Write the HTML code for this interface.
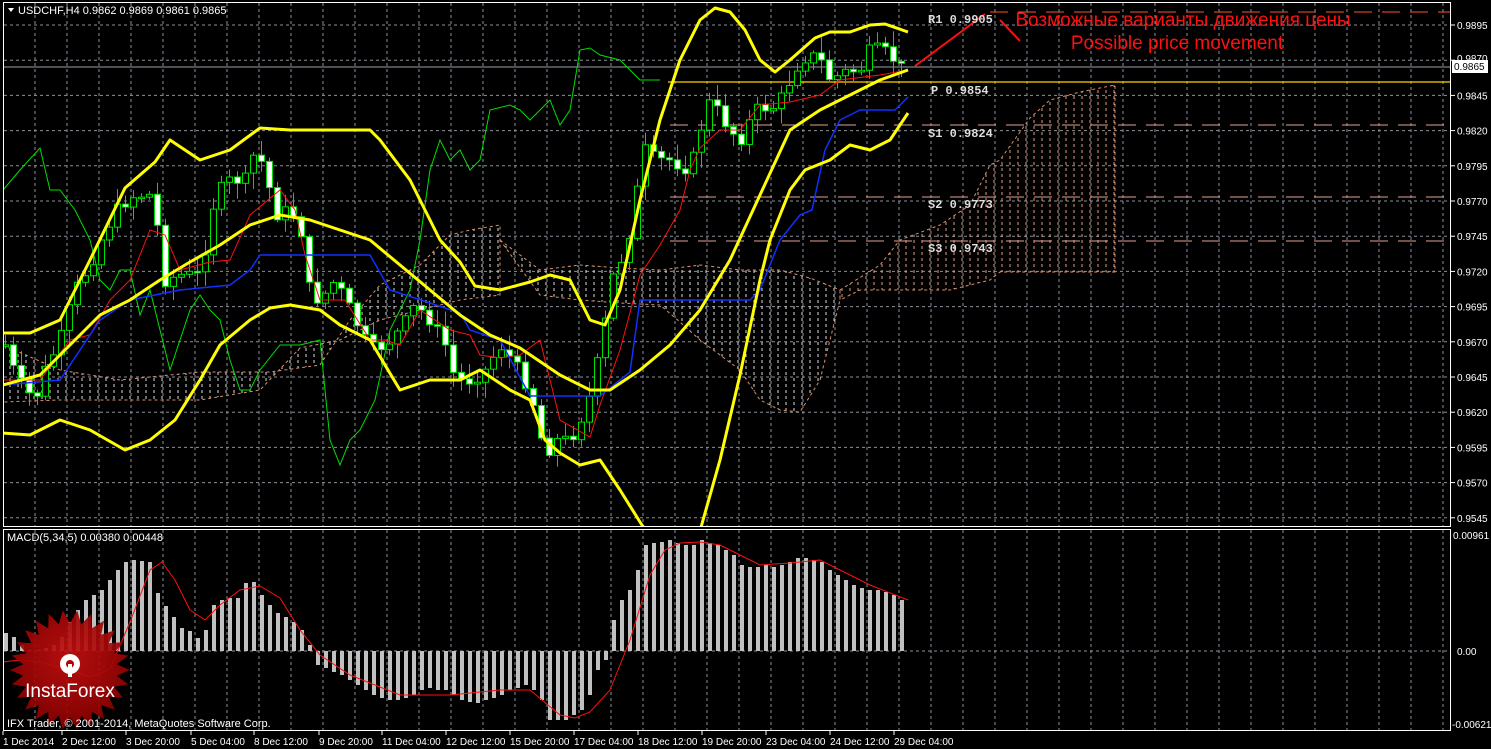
<!DOCTYPE html>
<html><head><meta charset="utf-8">
<style>
html,body{margin:0;padding:0;background:#000;overflow:hidden}
svg{display:block}
text{font-family:"Liberation Sans",sans-serif}
text.mono{font-family:"Liberation Mono",monospace;font-weight:bold}
</style></head>
<body>
<svg id="s" width="1491" height="749" viewBox="0 0 1491 749" xmlns="http://www.w3.org/2000/svg">
<defs>
<pattern id="hatch" width="8" height="6" patternUnits="userSpaceOnUse">
<line x1="2" y1="0" x2="2" y2="3" stroke="#e0a080" stroke-width="1"/>
</pattern>
<pattern id="hatchw" width="8" height="6" patternUnits="userSpaceOnUse">
<line x1="2" y1="0" x2="2" y2="3" stroke="#ddd" stroke-width="1"/>
</pattern>
<clipPath id="mainclip"><rect x="4" y="3" width="1446" height="523"/></clipPath>
<clipPath id="macdclip"><rect x="4" y="530" width="1446" height="200"/></clipPath>
<radialGradient id="lg" cx="0.5" cy="0.4" r="0.6"><stop offset="0" stop-color="#c41010"/><stop offset="1" stop-color="#8a0000"/></radialGradient>
</defs>
<g id="grid"></g>
<g id="cloud" clip-path="url(#mainclip)">
<polygon points="3,345 60,370 120,380 200,372 270,372 320,365 350,320 380,285 420,265 450,235 470,230 500,225 500,295 460,300 420,310 380,320 340,340 300,348 260,390 200,400 120,400 60,400 3,402" fill="url(#hatchw)" stroke="#d9906a" stroke-dasharray="3,3" stroke-width="1"/>
<polygon points="500,240 540,270 580,265 620,268 660,270 700,265 740,270 780,270 810,278 840,290 840,300 830,340 820,380 800,412 780,410 760,400 740,370 720,355 700,340 680,322 660,305 620,303 580,300 540,295" fill="url(#hatchw)" stroke="#d9906a" stroke-dasharray="3,3" stroke-width="1"/>
<polygon points="840,290 880,265 900,240 940,225 970,205 990,165 1000,160 1030,118 1050,100 1080,92 1115,85 1115,272 1000,272 990,280 950,290 900,290 860,290 840,300" fill="url(#hatch)" stroke="#d9906a" stroke-dasharray="3,3" stroke-width="1"/>
</g>
<g clip-path="url(#mainclip)" fill="none">
<line x1="990" y1="12" x2="1451" y2="12" stroke="#ff5020" stroke-dasharray="18,10"/>
<line x1="3" y1="67" x2="1451" y2="67" stroke="#9aa0a8"/>
<line x1="668" y1="82" x2="1451" y2="82" stroke="#ffd000" stroke-width="1.3"/>
<line x1="670" y1="125" x2="1451" y2="125" stroke="#e0a090" stroke-dasharray="18,10"/>
<line x1="670" y1="197" x2="1451" y2="197" stroke="#e0a090" stroke-dasharray="18,10"/>
<line x1="670" y1="241" x2="1451" y2="241" stroke="#e0a090" stroke-dasharray="18,10"/>
<polyline stroke="#00e000" stroke-width="1" points="3,190 20,170 40,148 50,190 60,190 75,210 90,240 100,280 110,290 120,270 130,270 140,315 150,290 160,330 170,370 180,340 190,310 200,295 210,310 220,320 230,360 240,390 250,390 260,370 280,345 300,345 320,340 330,440 340,465 350,440 360,430 375,400 390,330 410,290 420,240 430,170 440,140 450,160 460,150 470,170 480,160 490,110 510,105 520,110 530,120 550,100 560,125 570,110 580,50 590,48 600,55 620,60 640,80 660,80"/>
<g id="candles"></g>
<polyline stroke="#ff1010" stroke-width="1" points="3,380 40,380 70,340 90,335 110,300 130,280 150,230 165,235 180,270 210,262 230,260 250,215 280,190 295,210 305,255 320,300 345,300 370,340 385,340 400,345 420,310 450,330 470,335 480,355 500,358 520,355 540,340 560,420 590,437 600,405 620,350 640,275 660,245 680,210 690,170 700,148 720,130 740,130 760,105 790,102 820,95 840,80 880,75 908,70"/>
<polyline stroke="#1030ff" stroke-width="1.5" points="3,385 60,380 100,320 130,300 180,290 230,285 250,270 260,255 370,255 390,290 430,303 460,313 470,330 500,340 530,396 560,396 600,396 630,372 640,300 750,300 760,290 780,240 800,215 812,210 825,150 840,120 860,110 895,110 908,97"/>
<g stroke="#ffff00" stroke-width="3" stroke-linejoin="round">
<polyline points="3,333 30,333 60,320 90,260 125,188 155,162 170,140 200,160 230,150 260,128 290,130 330,130 370,130 380,140 410,180 440,240 460,262 475,286 500,290 530,282 550,275 570,280 590,320 605,325 620,290 640,200 660,120 680,60 700,20 715,8 730,12 745,30 760,60 775,72 790,60 815,38 830,32 850,32 870,25 885,24 908,32"/>
<polyline points="3,385 40,375 70,345 100,315 130,300 160,280 190,262 220,245 250,225 280,215 310,220 340,230 370,240 400,265 430,290 460,315 490,335 520,348 560,375 590,390 610,390 640,370 670,345 700,310 730,260 760,195 790,130 820,110 850,95 880,80 908,70"/>
<polyline points="3,433 30,435 60,420 90,430 125,450 150,440 175,420 200,380 220,345 250,320 270,308 290,305 320,310 340,325 370,340 400,390 430,380 460,380 480,370 510,390 530,400 545,440 560,453 580,465 600,460 620,490 640,522 655,545"/>
<polyline points="696,545 720,460 740,375 760,280 770,240 790,190 805,170 830,160 850,145 870,150 890,140 908,113"/>
</g>
<polyline stroke="#ff1010" stroke-width="2" points="915,66 985,14"/>
<polyline stroke="#ff1010" stroke-width="2" points="1000,20 1020,41"/>
</g>
<g id="macd" clip-path="url(#macdclip)"></g>
<polyline clip-path="url(#macdclip)" fill="none" stroke="#ff1010" stroke-width="1" points="3,662 20,660 40,662 70,670 90,677 110,669 130,622 150,570 162,562 175,580 190,610 205,620 220,605 240,590 260,586 280,598 300,630 320,655 350,675 400,695 450,695 500,690 530,690 560,715 575,718 590,712 610,690 630,640 650,575 665,550 680,543 700,542 720,545 740,555 760,565 790,563 820,560 840,570 870,585 908,600"/>
<rect x="3.5" y="2.5" width="1447" height="524" fill="none" stroke="#fff"/>
<rect x="3.5" y="529.5" width="1447" height="201" fill="none" stroke="#fff"/>
<polygon id="star" fill="url(#lg)" opacity="0.92"/>
<g fill="#fff">
<circle cx="70" cy="664" r="10"/>
<circle cx="70" cy="664" r="4" fill="#b00"/>
<rect x="68" y="664" width="4" height="13"/>
</g>
<text x="70" y="697" font-size="19" fill="#fff" text-anchor="middle">InstaForex</text>
<polygon points="8,8 14,8 11,12" fill="#fff"/>
<text x="18" y="14" font-size="11" fill="#fff">USDCHF,H4  0.9862 0.9869 0.9861 0.9865</text>
<text x="7" y="541" font-size="11" fill="#fff">MACD(5,34,5) 0.00380 0.00448</text>
<text x="7" y="727" font-size="11" fill="#fff">IFX Trader, © 2001-2014, MetaQuotes Software Corp.</text>
<g font-size="12" fill="#ddd">
<text class="mono" x="928" y="23">R1 0.9905</text>
<text class="mono" x="931" y="94">P 0.9854</text>
<text class="mono" x="928" y="137">S1 0.9824</text>
<text class="mono" x="928" y="208">S2 0.9773</text>
<text class="mono" x="928" y="252">S3 0.9743</text>
</g>
<text x="1183" y="26" font-size="19" fill="#ff1010" text-anchor="middle">Возможные варианты движения цены</text>
<text x="1177" y="49" font-size="19" fill="#ff1010" text-anchor="middle">Possible price movement</text>
<g id="axis" font-size="10" fill="#fff"></g>
<rect x="1452" y="60" width="36" height="13" fill="#fff"/>
<text x="1454" y="70" font-size="10" fill="#000">0.9865</text>
</svg>
<script>
(function(){
var NS="http://www.w3.org/2000/svg";
function el(p,t,a,txt){var e=document.createElementNS(NS,t);for(var k in a)e.setAttribute(k,a[k]);if(txt!==undefined)e.textContent=txt;p.appendChild(e);return e;}
var g=document.getElementById('grid');
for(var x=35;x<1451;x+=32){el(g,'line',{x1:x,y1:3,x2:x,y2:526,stroke:'#8a909a','stroke-dasharray':'3,3'});el(g,'line',{x1:x,y1:530,x2:x,y2:730,stroke:'#8a909a','stroke-dasharray':'3,3'});}
var ax=document.getElementById('axis');
for(var k=0;k<15;k++){var y=25+35.2*k;el(g,'line',{x1:4,y1:y,x2:1450,y2:y,stroke:'#8a909a','stroke-dasharray':'3,3'});
 el(ax,'line',{x1:1451,y1:y,x2:1455,y2:y,stroke:'#fff'});
 if(k!=1)el(ax,'text',{x:1457,y:y+4},(0.9895-0.0025*k).toFixed(4));}
el(ax,'text',{x:1457,y:62},'0.9870');
el(g,'line',{x1:4,y1:651,x2:1450,y2:651,stroke:'#8a909a','stroke-dasharray':'3,3'});
el(ax,'text',{x:1453,y:539},'0.00961');el(ax,'text',{x:1457,y:655},'0.00');el(ax,'text',{x:1452,y:728},'-0.00621');
var tl=[[7,'1 Dec 2014'],[66,'2 Dec 12:00'],[130,'3 Dec 20:00'],[195,'5 Dec 04:00'],[258,'8 Dec 12:00'],[323,'9 Dec 20:00'],[386,'11 Dec 04:00'],[450,'12 Dec 12:00'],[514,'15 Dec 20:00'],[578,'17 Dec 04:00'],[642,'18 Dec 12:00'],[706,'19 Dec 20:00'],[770,'23 Dec 04:00'],[834,'24 Dec 12:00'],[898,'29 Dec 04:00']];
tl.forEach(function(t){el(ax,'line',{x1:t[0]-4,y1:731,x2:t[0]-4,y2:735,stroke:'#fff'});el(ax,'text',{x:t[0]-4,y:745},t[1]);});
var P=[[5,345],[15,375],[25,390],[35,400],[45,370],[60,340],[75,290],[90,265],[105,230],[120,205],[135,195],[150,195],[160,240],[165,280],[180,275],[200,275],[215,195],[230,180],[245,180],[255,150],[265,170],[275,215],[290,210],[300,225],[310,295],[320,300],[335,280],[345,300],[355,320],[370,350],[385,345],[400,330],[415,305],[430,320],[445,345],[455,380],[470,380],[485,370],[500,345],[515,365],[530,390],[545,455],[555,440],[570,440],[580,420],[590,395],[600,350],[615,265],[625,255],[635,200],[645,150],[655,160],[670,160],[690,170],[700,130],[710,100],[720,115],[730,130],[740,140],[750,120],[760,105],[770,110],[780,100],[790,80],[800,60],[810,55],[820,60],[830,80],[845,72],[860,70],[870,50],[880,50],[890,55],[900,68]];
function interp(x){for(var i=1;i<P.length;i++){if(x<=P[i][0]){var a=P[i-1],b=P[i];return a[1]+(b[1]-a[1])*(x-a[0])/(b[0]-a[0]);}}return P[P.length-1][1];}
var cg=document.getElementById('candles');var seed=7;function rnd(){seed=(seed*9301+49297)%233280;return seed/233280;}
var prev=interp(5);
for(var x=5;x<=905;x+=8){var c=interp(x)+(rnd()-0.5)*14;var o=prev;var hi=Math.min(o,c)-rnd()*14-2,lo=Math.max(o,c)+rnd()*14+2;
 el(cg,'line',{x1:x+0.5,y1:hi,x2:x+0.5,y2:lo,stroke:'#00e000','stroke-width':1});
 var bt=Math.min(o,c),bh=Math.max(Math.abs(c-o),1.5);
 el(cg,'rect',{x:x-2.5,y:bt,width:6,height:bh,fill:(c>o?'#fff':'#000'),stroke:'#00e000','stroke-width':1});
 prev=c;}
var M=[633,637,645,650,650,648,645,637,622,610,600,595,590,580,570,562,560,561,562,593,606,617,628,631,638,630,605,600,598,598,583,582,595,605,613,617,622,630,645,665,668,672,675,680,685,690,695,698,700,700,698,695,690,688,690,690,695,700,702,703,700,698,695,690,688,685,690,700,720,720,720,715,710,695,670,660,620,600,590,570,545,543,542,540,543,545,545,540,543,545,550,555,565,567,567,565,567,565,562,558,558,560,562,570,575,580,585,588,590,590,592,595,600];
var mg=document.getElementById('macd');
M.forEach(function(v,i){var x=4+8*i;var y=Math.min(v,651),h=Math.abs(v-651);if(h<1)h=1;el(mg,'rect',{x:x,y:y,width:4,height:h,fill:'#c0c0c0'});});
var pts=[],n=26;for(var i=0;i<n*2;i++){var r=i%2?47:60,a=Math.PI*i/n;pts.push((70+r*Math.cos(a)).toFixed(1)+','+(670+r*Math.sin(a)).toFixed(1));}
document.getElementById('star').setAttribute('points',pts.join(' '));
})();
</script>
</body></html>
